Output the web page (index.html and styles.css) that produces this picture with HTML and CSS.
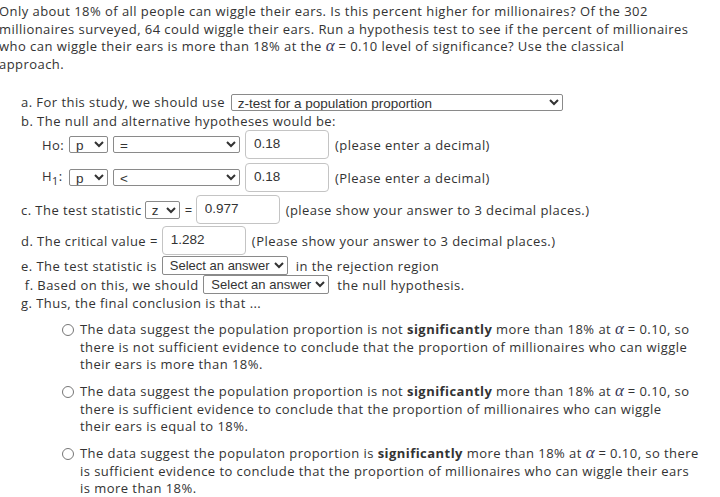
FILE: index.html
```html
<!DOCTYPE html>
<html>
<head>
<meta charset="utf-8">
<link rel="stylesheet" href="styles.css">
</head>
<body>
<p class="question">Only about 18% of all people can wiggle their ears. Is this percent higher for millionaires? Of the 302<br>millionaires surveyed, 64 could wiggle their ears. Run a hypothesis test to see if the percent of millionaires<br>who can wiggle their ears is more than 18% at the <span class="alpha">α</span> = 0.10 level of significance? Use the classical<br>approach.</p>

<div class="parts">
  <div class="row row-a">a. For this study, we should use <select class="sel sel-test"><option>z-test for a population proportion</option></select></div>
  <div class="row row-b">b. The null and alternative hypotheses would be:</div>
  <div class="hyp hyp-0">
    <span class="hlabel">Ho:</span>
    <select class="sel sel-p"><option>p</option></select>
    <select class="sel sel-op"><option>=</option></select>
    <input class="num" type="text" value="0.18">
    <span class="hint">(please enter a decimal)</span>
  </div>
  <div class="hyp hyp-1">
    <span class="hlabel">H<sub>1</sub>:</span>
    <select class="sel sel-p"><option>p</option></select>
    <select class="sel sel-op"><option>&lt;</option></select>
    <input class="num" type="text" value="0.18">
    <span class="hint">(Please enter a decimal)</span>
  </div>
  <div class="hyp hyp-c">
    <span>c. The test statistic</span>
    <select class="sel sel-z"><option>z</option></select>
    <span class="eq">=</span>
    <input class="num" type="text" value="0.977">
    <span class="hint">(please show your answer to 3 decimal places.)</span>
  </div>
  <div class="hyp hyp-d">
    <span>d. The critical value =</span>
    <input class="num" type="text" value="1.282">
    <span class="hint">(Please show your answer to 3 decimal places.)</span>
  </div>
  <div class="row row-e">e. The test statistic is <select class="sel sel-ans"><option>Select an answer</option></select> in the rejection region</div>
  <div class="row row-f"> f. Based on this, we should <select class="sel sel-ans"><option>Select an answer</option></select> the null hypothesis.</div>
  <div class="row row-g">g. Thus, the final conclusion is that ...</div>

  <div class="options">
    <label class="opt"><input type="radio" name="c" class="radio"><span class="opt-text">The data suggest the population proportion is not <b>significantly</b> more than 18% at <span class="alpha">α</span> = 0.10, so<br>there is not sufficient evidence to conclude that the proportion of millionaires who can wiggle<br>their ears is more than 18%.</span></label>
    <label class="opt"><input type="radio" name="c" class="radio"><span class="opt-text">The data suggest the population proportion is not <b>significantly</b> more than 18% at <span class="alpha">α</span> = 0.10, so<br>there is sufficient evidence to conclude that the proportion of millionaires who can wiggle<br>their ears is equal to 18%.</span></label>
    <label class="opt"><input type="radio" name="c" class="radio"><span class="opt-text">The data suggest the populaton proportion is <b>significantly</b> more than 18% at <span class="alpha">α</span> = 0.10, so there<br>is sufficient evidence to conclude that the proportion of millionaires who can wiggle their ears<br>is more than 18%.</span></label>
  </div>
</div>
</body>
</html>
```
FILE: styles.css
```css
html, body {
  margin: 0;
  padding: 0;
  background: #ffffff;
}
body {
  font-family: "Open Sans", "DejaVu Sans", sans-serif;
  font-size: 13px;
  letter-spacing: 0.45px;
  color: #333333;
  padding: 3px 0 0 0;
}
.question {
  margin: 0 0 0 -1px;
  line-height: 17.5px;
  white-space: nowrap;
}
.alpha {
  font-family: "Liberation Serif", serif;
  font-style: italic;
  font-size: 17px;
  letter-spacing: 0;
  color: #3a3a5a;
  line-height: 0;
}
.parts {
  margin-top: 20px;
  padding-left: 21px;
}
.row {
  line-height: 18px;
  height: 18px;
  display: flex;
  align-items: center;
  white-space: pre;
}
.row-b { height: 19px; }
.row-e { margin-top: 1px; height: 19px; }
.row-f { height: 19px; }
.row-g { height: 17px; }
.sel {
  font-family: "Liberation Sans", Arial, sans-serif;
  font-size: 13.5px;
  letter-spacing: 0;
  color: #333;
  border: 1px solid #8a8a8a;
  border-radius: 2px;
  background: #fff;
  height: 17px;
  padding: 0 0 0 2px;
  margin: 0 4px;
}
.sel-test { width: 332px; margin-left: 2px; }
.hyp {
  display: flex;
  align-items: center;
  height: 29px;
  white-space: pre;
}
.hyp-0, .hyp-1 { padding-left: 21px; }
.hyp-1 { margin-top: 4px; }
.hyp-c { margin-top: 3px; }
.hyp-d { margin-top: 2px; }
.hlabel { width: 27px; }
.sel-p { width: 39px; margin: 0 5px 0 0; }
.sel-op { width: 127px; margin: 0 5px 0 0; }
.sel-z { width: 35px; margin: 0 5px 0 3px; height: 18px; }
.eq { margin-right: 3px; }
.sel-ans { width: 126px; height: 19px; margin: 0 4px 0 1px; font-size: 13px; padding-left: 3px; }
.num {
  font-family: "Liberation Sans", Arial, sans-serif;
  font-size: 13.5px;
  letter-spacing: 0;
  color: #333;
  width: 84px;
  height: 29px;
  box-sizing: border-box;
  border: 1px solid #c4c4c4;
  border-radius: 4px;
  padding: 0 8px 2px 8px;
  margin: 0 6px 0 0;
}
.hyp-d .num { margin-left: 4px; }
.options {
  margin-top: 10px;
  padding-left: 40px;
}
.opt {
  display: flex;
  align-items: flex-start;
  line-height: 17.5px;
  white-space: nowrap;
  margin-bottom: 9.5px;
}
.opt:last-child { margin-bottom: 0; }
.opt-text { line-height: 17.5px; }
.radio {
  width: 12px;
  height: 12px;
  margin: 3px 6px 0 1px;
  accent-color: #888;
}
b { font-weight: bold; }
```
